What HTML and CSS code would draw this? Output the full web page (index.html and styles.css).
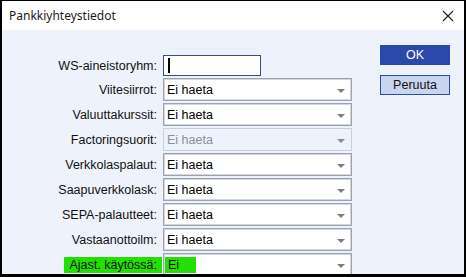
FILE: index.html
```html
<!DOCTYPE html>
<html lang="fi">
<head>
    <meta charset="UTF-8">
    <title>Pankkiyhteystiedot</title>
    <link rel="stylesheet" href="styles.css">
</head>
<body>
    <div class="dialog">
        <div class="titlebar">
            <span class="title">Pankkiyhteystiedot</span>
            <svg class="close" width="12" height="12" viewBox="0 0 12 12">
                <path d="M1 1 L11 11 M11 1 L1 11" stroke="#1b1b1b" stroke-width="1.1" fill="none"/>
            </svg>
        </div>
        <div class="content">
            <div class="form">
                <label><span>WS-aineistoryhm:</span></label>
                <div class="input"><span class="caret"></span></div>

                <label><span>Viitesiirrot:</span></label>
                <div class="select">Ei haeta</div>

                <label><span>Valuuttakurssit:</span></label>
                <div class="select">Ei haeta</div>

                <label><span>Factoringsuorit:</span></label>
                <div class="select disabled">Ei haeta</div>

                <label><span>Verkkolaspalaut:</span></label>
                <div class="select">Ei haeta</div>

                <label><span>Saapuverkkolask:</span></label>
                <div class="select">Ei haeta</div>

                <label><span>SEPA-palautteet:</span></label>
                <div class="select">Ei haeta</div>

                <label><span>Vastaanottoilm:</span></label>
                <div class="select">Ei haeta</div>

                <label><span class="mark">Ajast. käytössä:</span></label>
                <div class="select"><span class="mark value">Ei</span></div>
            </div>
            <div class="buttons">
                <div class="btn ok">OK</div>
                <div class="btn cancel">Peruuta</div>
            </div>
        </div>
    </div>
</body>
</html>
```

FILE: styles.css
```css
body {
    margin: 0;
    padding: 0;
    background-color: #000;
    font-family: "Liberation Sans", Arial, sans-serif;
    font-size: 12.5px;
    color: #111;
}
.dialog {
    width: 462px;
    height: 273px;
    border-top: 1px solid #000;
    border-left: 2px solid #000;
    border-right: 2px solid #000;
    border-bottom: 3px solid #000;
    background-color: #eef2fa;
    overflow: hidden;
}
.titlebar {
    height: 29px;
    background-color: #fff;
    display: flex;
    align-items: center;
    justify-content: space-between;
    padding: 0 10px 0 7px;
}
.title {
    font-family: "Noto Sans", sans-serif;
    font-size: 12px;
    color: #1a1a1a;
}
.close {
    display: block;
}
.content {
    display: flex;
    gap: 28px;
}
.form {
    display: grid;
    grid-template-columns: 160px 189px;
    grid-template-rows: 21px repeat(8, 23px);
    column-gap: 1px;
    row-gap: 2px;
    padding-top: 25px;
}
.form label {
    display: flex;
    align-items: center;
    justify-content: flex-end;
}
.form label span {
    padding: 0 5px;
    line-height: 16px;
}
.input {
    width: 92px;
    border: 1px solid #3a4b8b;
    background-color: #fff;
    display: flex;
    align-items: center;
    padding-left: 4px;
}
.caret {
    width: 2px;
    height: 15px;
    background-color: #000;
}
.select {
    position: relative;
    border: 1px solid #9da2ad;
    box-shadow: inset 0 0 0 1px #d3d7e0;
    background-color: #fff;
    display: flex;
    align-items: center;
    padding-left: 3px;
    color: #000;
}
.select::after {
    content: "";
    position: absolute;
    right: 6px;
    top: 10px;
    border-left: 4px solid transparent;
    border-right: 4px solid transparent;
    border-top: 4px solid #7d7d82;
}
.select.disabled {
    background-color: #eef2fa;
    border-color: #c9cfe2;
    box-shadow: none;
    color: #8c9099;
}
.select.disabled::after {
    border-top-color: #8a8a90;
}
.mark {
    background-color: #22e000;
}
.mark.value {
    display: block;
    width: 28px;
    padding-left: 3px;
    line-height: 16px;
    margin-left: -2px;
}
.buttons {
    display: flex;
    flex-direction: column;
    gap: 10px;
    padding-top: 15px;
}
.btn {
    width: 70px;
    height: 20px;
    box-sizing: border-box;
    display: flex;
    align-items: center;
    justify-content: center;
}
.ok {
    background-color: #2d48ab;
    color: #fff;
}
.cancel {
    background-color: #c9d4ef;
    border: 1px solid #2f4aa6;
    color: #111;
}
```
